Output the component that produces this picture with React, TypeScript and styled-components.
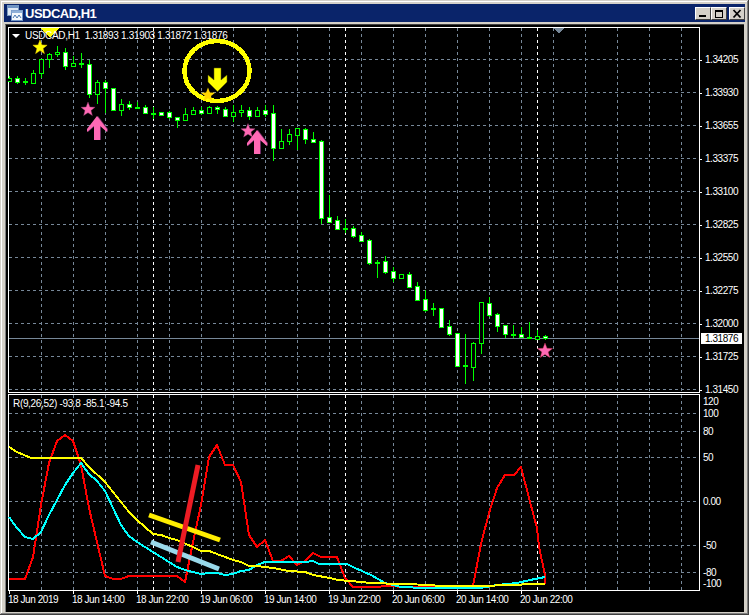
import React from "react";
import styled, { createGlobalStyle } from "styled-components";

const GlobalStyle = createGlobalStyle`
  html, body {
    margin: 0;
    padding: 0;
    background: #d4d0c8;
  }
`;

// body top / bottom are pixel rows, same for the wick
type Candle = [x: number, wickTop: number, wickBottom: number, bodyTop: number, bodyBottom: number, kind: "up" | "down" | "doji"];

const candles: Candle[] = [
  [9, 76, 82, 78, 81, "up"],
  [17, 76, 84, 78, 82, "down"],
  [25, 78, 85, 81, 82, "doji"],
  [33, 70, 83, 73, 83, "up"],
  [41, 59, 78, 59, 73, "up"],
  [49, 53, 68, 54, 59, "up"],
  [57, 46, 57, 52, 54, "up"],
  [65, 48, 70, 52, 66, "down"],
  [73, 56, 67, 63, 66, "up"],
  [81, 53, 68, 63, 64, "doji"],
  [89, 60, 98, 64, 94, "down"],
  [97, 80, 104, 82, 94, "up"],
  [105, 80, 113, 82, 88, "down"],
  [113, 88, 111, 88, 110, "down"],
  [121, 99, 116, 104, 110, "up"],
  [129, 101, 110, 104, 107, "down"],
  [137, 102, 109, 107, 108, "doji"],
  [145, 105, 114, 107, 113, "down"],
  [153, 107, 119, 113, 114, "doji"],
  [161, 112, 116, 112, 115, "down"],
  [169, 111, 119, 112, 117, "down"],
  [177, 117, 128, 117, 120, "down"],
  [185, 108, 120, 114, 120, "up"],
  [193, 107, 115, 110, 114, "up"],
  [201, 107, 115, 110, 113, "down"],
  [209, 106, 113, 107, 113, "up"],
  [217, 106, 114, 107, 109, "down"],
  [225, 107, 117, 109, 116, "down"],
  [233, 105, 122, 112, 116, "up"],
  [241, 105, 117, 110, 112, "up"],
  [249, 107, 120, 110, 116, "down"],
  [257, 107, 117, 110, 116, "up"],
  [265, 105, 117, 110, 114, "down"],
  [273, 105, 161, 113, 148, "down"],
  [281, 129, 149, 141, 148, "up"],
  [289, 129, 145, 134, 141, "up"],
  [297, 128, 150, 128, 135, "up"],
  [305, 128, 144, 129, 139, "down"],
  [313, 132, 143, 139, 142, "down"],
  [321, 140, 224, 141, 218, "down"],
  [329, 195, 223, 217, 222, "down"],
  [337, 216, 230, 220, 229, "down"],
  [345, 219, 233, 228, 229, "doji"],
  [353, 226, 238, 228, 236, "down"],
  [361, 232, 242, 235, 241, "down"],
  [369, 239, 265, 240, 263, "down"],
  [377, 260, 278, 262, 263, "doji"],
  [385, 256, 274, 261, 272, "down"],
  [393, 267, 282, 271, 278, "down"],
  [401, 274, 278, 274, 278, "up"],
  [409, 272, 288, 274, 287, "down"],
  [417, 282, 301, 286, 300, "down"],
  [425, 290, 312, 299, 310, "down"],
  [433, 303, 316, 308, 309, "doji"],
  [441, 308, 327, 308, 327, "down"],
  [449, 320, 336, 326, 334, "down"],
  [457, 333, 367, 333, 366, "down"],
  [465, 334, 384, 365, 366, "doji"],
  [473, 342, 381, 343, 367, "up"],
  [481, 302, 354, 302, 343, "up"],
  [489, 297, 317, 303, 315, "down"],
  [497, 313, 332, 314, 326, "down"],
  [505, 325, 338, 325, 334, "down"],
  [513, 325, 338, 334, 335, "doji"],
  [521, 327, 338, 334, 337, "down"],
  [529, 322, 338, 337, 338, "doji"],
  [537, 330, 339, 336, 339, "up"],
  [545, 335, 340, 336, 338, "down"],
];

const redLine =
  "9,579 25,579 33,557 41,505 49,463 57,441 65,435 73,441 81,465 89,508 97,542 105,576 113,579 121,579 129,576 177,576 185,582 193,542 201,505 209,457 217,445 225,465 233,465 241,482 249,535 257,547 265,540 273,561 281,561 289,556 297,565 305,561 313,553 321,557 337,557 345,578 353,587 377,587 385,586 409,587 473,586 481,544 489,513 497,488 505,475 514,475 521,467 529,498 537,528 539,547 545,575 545,584";
const cyanLine =
  "9,517 17,528 25,537 33,539 41,532 49,515 57,500 65,485 73,473 81,463 89,474 97,481 105,491 113,508 121,525 129,536 137,542 145,547 153,552 161,557 169,562 177,567 185,570 193,572 201,574 209,573 217,573 225,575 233,574 241,571 249,570 257,565 265,562 305,562 313,561 319,564 347,564 355,568 371,575 385,583 401,587 425,588 480,588 497,585 517,583 530,580 545,577";
const yellowLine =
  "9,447 17,452 31,458 81,458 89,467 105,482 113,492 121,502 129,512 137,520 145,527 153,534 161,535 169,538 177,540 193,547 201,551 209,551 225,557 233,560 241,562 249,566 257,566 273,568 289,571 305,572 313,575 330,578 338,580 362,582 370,583 433,585 437,586 490,586 500,585 545,584";

const priceLabels = [
  ["1.34205", 59], ["1.33930", 92], ["1.33655", 125], ["1.33375", 158],
  ["1.33100", 191], ["1.32825", 224], ["1.32550", 257], ["1.32275", 290],
  ["1.32000", 323], ["1.31725", 356], ["1.31450", 389],
] as const;

const indicatorLabels = [
  ["120", 401], ["100", 413], ["80", 431], ["50", 457], ["0.00", 501],
  ["-50", 545], ["-80", 572], ["-100", 583],
] as const;

const timeLabels = [
  "18 Jun 2019", "18 Jun 14:00", "18 Jun 22:00", "19 Jun 06:00", "19 Jun 14:00",
  "19 Jun 22:00", "20 Jun 06:00", "20 Jun 14:00", "20 Jun 22:00",
];

const gridX = Array.from({ length: 21 }, (_, i) => 41 + i * 32);
const separators = [153, 345, 537];

const starPoints = (cx: number, cy: number, r: number) =>
  Array.from({ length: 10 }, (_, i) => {
    const radius = i % 2 === 0 ? r : r * 0.42;
    const angle = (Math.PI / 5) * i - Math.PI / 2;
    return `${(cx + radius * Math.cos(angle)).toFixed(1)},${(cy + radius * Math.sin(angle)).toFixed(1)}`;
  }).join(" ");

const upArrow = "l10 13v3l-7-6v14h-6v-14l-7 6v-3z";

const App = () => {
  return (
    <>
      <GlobalStyle />
      <Frame>
        <TitleBar>
          <TitleIcon viewBox="0 0 16 16">
            <rect x="0.5" y="0.5" width="11" height="10" fill="#dfe9f5" stroke="#7d9cc0" />
            <rect x="0.5" y="0.5" width="11" height="2.5" fill="#6f93c4" />
            <rect x="4.5" y="5.5" width="11" height="10" fill="#f4f8fc" stroke="#6f93c4" />
            <rect x="4.5" y="5.5" width="11" height="2.5" fill="#8fb0d8" />
            <path d="M6 13l2-3 2 3 2-3 2 3" fill="none" stroke="#4a78b0" />
          </TitleIcon>
          <TitleText>USDCAD,H1</TitleText>
          <WindowButtons>
            <WindowButton>
              <svg width="14" height="11" viewBox="0 0 14 11" shapeRendering="crispEdges">
                <rect x="3" y="7" width="7" height="2" fill="#000" />
              </svg>
            </WindowButton>
            <WindowButton>
              <svg width="14" height="11" viewBox="0 0 14 11" shapeRendering="crispEdges">
                <rect x="3.5" y="2.5" width="7" height="7" fill="none" stroke="#000" />
                <rect x="3" y="2" width="8" height="2" fill="#000" />
              </svg>
            </WindowButton>
            <CloseButton>
              <svg width="14" height="11" viewBox="0 0 14 11">
                <path d="M3.5 2l7 7.5M10.5 2l-7 7.5" stroke="#000" strokeWidth="1.8" fill="none" />
              </svg>
            </CloseButton>
          </WindowButtons>
        </TitleBar>

        <ChartBody>
          <Row>
            <PricePane>
              <svg width="692" height="366" viewBox="8 27 692 366" shapeRendering="crispEdges">
                {[59, 92, 125, 158, 191, 224, 257, 290, 323, 356, 389].map((y) => (
                  <GridLine key={y} x1="9" x2="699" y1={y + 0.5} y2={y + 0.5} />
                ))}
                {gridX.map((x) => (
                  <GridLine key={x} x1={x + 0.5} x2={x + 0.5} y1="28" y2="392" />
                ))}
                {separators.map((x) => (
                  <SeparatorLine key={x} x1={x + 0.5} x2={x + 0.5} y1="28" y2="392" />
                ))}
                <line x1="9" x2="699" y1="338.5" y2="338.5" stroke="#778899" />
                {candles.map(([x, wt, wb, bt, bb, kind]) => (
                  <g key={x}>
                    <line x1={x + 0.5} x2={x + 0.5} y1={wt} y2={wb} stroke="#00ff00" />
                    {kind === "doji" ? (
                      <rect x={x - 2} y={bt} width="5" height="2" fill="#00ff00" />
                    ) : (
                      <rect
                        x={x - 1.5}
                        y={bt + 0.5}
                        width="4"
                        height={bb - bt}
                        fill={kind === "down" ? "#fff" : "#000"}
                        stroke="#00ff00"
                      />
                    )}
                  </g>
                ))}
                <polygon points="40,28 59,28 50,37" fill="#ffff00" />
                <polygon points="553,28 565,28 559,33" fill="#778899" />
                <ellipse cx="217" cy="71" rx="32.5" ry="30" fill="none" stroke="#ffff00" strokeWidth="4.5" />
                <g shapeRendering="auto">
                  <polygon points={starPoints(40, 47.5, 7.5)} fill="#ffff00" stroke="#ffd700" strokeWidth="0.5" />
                  <polygon points={starPoints(208, 95, 7.5)} fill="#ffd700" />
                  <path d="M214 68h7v12l6-5v7l-9.5 9.5-9.5-9.5v-7l6 5z" fill="#ffff00" stroke="#5f5f00" strokeWidth="0.5" />
                  <polygon points={starPoints(88, 109.5, 7.5)} fill="#ff69b4" stroke="#8a3a6a" strokeWidth="0.4" />
                  <polygon points={starPoints(248, 131, 7.5)} fill="#ff69b4" stroke="#8a3a6a" strokeWidth="0.4" />
                  <polygon points={starPoints(545, 351, 8)} fill="#ff69b4" stroke="#d0304a" strokeWidth="0.4" />
                  <path d={`M98 116${upArrow}`} fill="#6a2a60" />
                  <path d={`M97 116${upArrow}`} fill="#ff69b4" />
                  <path d={`M258 130${upArrow}`} fill="#6a2a60" />
                  <path d={`M257 130${upArrow}`} fill="#ff69b4" />
                </g>
              </svg>
              <SymbolInfo>
                <SymbolCaret />
                USDCAD,H1&nbsp;&nbsp;1.31893 1.31903 1.31872 1.31876
              </SymbolInfo>
            </PricePane>
            <PriceAxis>
              {priceLabels.map(([label, y]) => (
                <AxisLabel key={label} style={{ top: y - 26 }}>
                  <AxisTick />
                  {label}
                </AxisLabel>
              ))}
              <CurrentPrice>1.31876</CurrentPrice>
            </PriceAxis>
          </Row>

          <Row>
            <IndicatorPane>
              <svg width="692" height="197" viewBox="8 394 692 197" shapeRendering="crispEdges">
                {[413, 431, 457, 501, 545, 572].map((y) => (
                  <GridLine key={y} x1="9" x2="699" y1={y + 0.5} y2={y + 0.5} />
                ))}
                {gridX.map((x) => (
                  <GridLine key={x} x1={x + 0.5} x2={x + 0.5} y1="395" y2="590" />
                ))}
                {separators.map((x) => (
                  <SeparatorLine key={x} x1={x + 0.5} x2={x + 0.5} y1="395" y2="590" />
                ))}
                <Series points={redLine} stroke="#ff0000" />
                <Series points={cyanLine} stroke="#00ffff" />
                <Series points={yellowLine} stroke="#ffff00" />
                <g shapeRendering="auto">
                  <line x1="149" y1="515" x2="220" y2="540" stroke="#ffee00" strokeWidth="5" />
                  <line x1="151" y1="542" x2="219" y2="569" stroke="#99d9ea" strokeWidth="5" />
                  <line x1="198" y1="465" x2="178" y2="562" stroke="#ed1c24" strokeWidth="5" />
                </g>
              </svg>
              <IndicatorInfo>R(9,26,52) -93.8 -85.1 -94.5</IndicatorInfo>
            </IndicatorPane>
            <IndicatorAxis>
              {indicatorLabels.map(([label, y]) => (
                <IndicatorLabel key={label} style={{ top: y - 393 }}>
                  {label}
                </IndicatorLabel>
              ))}
            </IndicatorAxis>
          </Row>

          <TimeAxis>
            {timeLabels.map((label) => (
              <TimeLabel key={label}>{label}</TimeLabel>
            ))}
          </TimeAxis>
        </ChartBody>
      </Frame>
    </>
  );
};

export default App;

const Frame = styled.div`
  width: 749px;
  height: 615px;
  box-sizing: border-box;
  padding: 4px 4px 3px 4px;
  background: #d4d0c8;
  box-shadow: inset -1px -1px #404040, inset 1px 1px #d4d0c8, inset -2px -2px #808080, inset 2px 2px #fff;
  display: flex;
  flex-direction: column;
  overflow: hidden;
  font-family: "Liberation Sans", Arial, sans-serif;
`;

const TitleBar = styled.div`
  height: 18px;
  flex: none;
  display: flex;
  align-items: center;
  background: #0a246a;
  padding: 0 0 0 3px;
`;

const TitleIcon = styled.svg`
  width: 16px;
  height: 16px;
  margin-right: 2px;
  flex: none;
`;

const TitleText = styled.span`
  font-weight: 700;
  font-size: 13px;
  letter-spacing: -0.5px;
  color: #fff;
  flex: 1;
`;

const WindowButtons = styled.div`
  display: flex;
`;

const WindowButton = styled.div`
  width: 16px;
  height: 13px;
  box-sizing: border-box;
  background: #d4d0c8;
  border: 1px solid;
  border-color: #fff #404040 #404040 #fff;
  display: flex;
  align-items: center;
  justify-content: center;
`;

const CloseButton = styled(WindowButton)`
  margin-left: 2px;
`;

const ChartBody = styled.div`
  flex: 1;
  background: #000;
  margin: 2px 1px 0 1px;
  border-top: 1px solid #404040;
  border-left: 1px solid #808080;
  padding: 2px 0 0 2px;
  display: flex;
  flex-direction: column;
  gap: 1px;
  min-height: 0;
`;

const Row = styled.div`
  display: flex;
`;

const PricePane = styled.div`
  position: relative;
  width: 692px;
  height: 366px;
  flex: none;
  overflow: hidden;
  box-shadow: inset 0 0 0 1px #fff;

  svg {
    display: block;
  }
`;

const IndicatorPane = styled(PricePane)`
  height: 197px;
`;

const GridLine = styled.line`
  stroke: #778899;
  stroke-dasharray: 3 3;
`;

const SeparatorLine = styled.line`
  stroke: #fff;
  stroke-dasharray: 3 3;
`;

const Series = styled.polyline`
  fill: none;
  stroke-width: 2;
  stroke-linejoin: round;
`;

const ChartText = styled.div`
  font-size: 10px;
  line-height: 12px;
  letter-spacing: -0.45px;
  color: #fff;
  white-space: nowrap;
`;

const SymbolInfo = styled(ChartText)`
  position: absolute;
  left: 4px;
  top: 3px;
  display: flex;
  align-items: center;
  white-space: pre;
  letter-spacing: -0.33px;
`;

const SymbolCaret = styled.span`
  width: 0;
  height: 0;
  margin: 0 5px 0 0;
  border-left: 4px solid transparent;
  border-right: 4px solid transparent;
  border-top: 4px solid #fff;
`;

const IndicatorInfo = styled(ChartText)`
  position: absolute;
  left: 5px;
  top: 4px;
  letter-spacing: -0.33px;
`;

const PriceAxis = styled.div`
  position: relative;
  flex: 1;
`;

const IndicatorAxis = styled(PriceAxis)``;

const AxisLabel = styled(ChartText)`
  position: absolute;
  left: 0;
  display: flex;
  align-items: center;
  transform: translateY(-50%);
`;

const AxisTick = styled.span`
  width: 2px;
  height: 1px;
  background: #fff;
  margin-right: 3px;
`;

const IndicatorLabel = styled(ChartText)`
  position: absolute;
  left: 3px;
  transform: translateY(-50%);
`;

const CurrentPrice = styled(ChartText)`
  position: absolute;
  left: 1px;
  top: 306px;
  width: 41px;
  height: 11px;
  line-height: 11px;
  box-sizing: border-box;
  padding-left: 4px;
  background: #fff;
  color: #000;
`;

const TimeAxis = styled.div`
  display: flex;
  padding-top: 1px;
`;

const TimeLabel = styled(ChartText)`
  position: relative;
  width: 64px;
  flex: none;
  line-height: 14px;

  &::before {
    content: "";
    position: absolute;
    left: 1px;
    top: -2px;
    width: 1px;
    height: 3px;
    background: #fff;
  }
`;
